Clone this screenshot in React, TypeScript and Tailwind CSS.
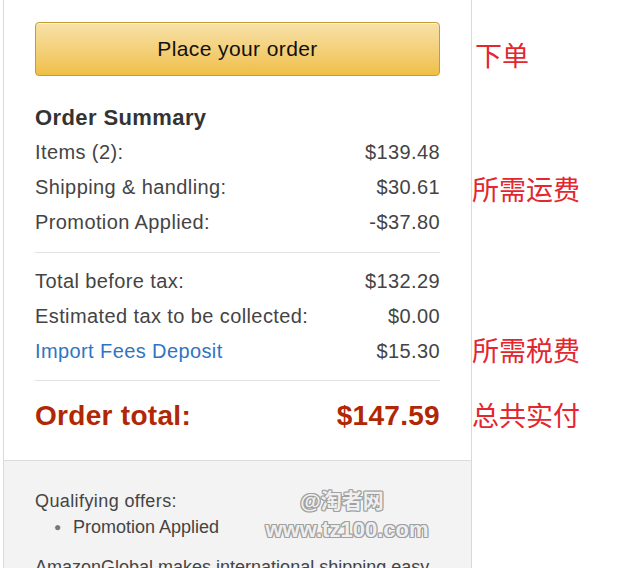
import React from "react";

type Row = { label: string; value: string; link?: boolean };

const topRows: Row[] = [
  { label: "Items (2):", value: "$139.48" },
  { label: "Shipping & handling:", value: "$30.61" },
  { label: "Promotion Applied:", value: "-$37.80" },
];

const taxRows: Row[] = [
  { label: "Total before tax:", value: "$132.29" },
  { label: "Estimated tax to be collected:", value: "$0.00" },
  { label: "Import Fees Deposit", value: "$15.30", link: true },
];

const SummaryRow = ({ row }: { row: Row }) => (
  <div className="flex justify-between h-[35px] leading-[35px] text-[20px] tracking-[0.4px]">
    <span className={row.link ? "text-[#2f74c2]" : "text-[#444]"}>{row.label}</span>
    <span className="text-[#444]">{row.value}</span>
  </div>
);

const Note = ({ text, className }: { text: string; className: string }) => (
  <div
    className={`h-[34px] leading-[34px] text-[27px] text-[#e4262e] whitespace-nowrap ${className}`}
    style={{ fontFamily: '"Noto Sans CJK SC", sans-serif' }}
  >
    {text}
  </div>
);

export default function App() {
  return (
    <div
      className="flex w-[635px] h-[568px] overflow-hidden bg-white"
      style={{ fontFamily: '"Liberation Sans", Arial, sans-serif' }}
    >
      <div className="ml-[3px] w-[469px] shrink-0 border-x border-[#d9d9d9] flex flex-col">
        <div className="px-[31px] pt-[22px] pb-[27px]">
          <button className="w-full h-[54px] rounded-[4px] border border-[#c59c38] bg-gradient-to-b from-[#f8e1a7] to-[#efbf45] text-[21px] tracking-[0.4px] text-[#111] shadow-[inset_0_1px_0_rgba(255,255,255,0.6)]">
            Place your order
          </button>

          <div className="mt-[29px] h-[26px] leading-[26px] text-[22px] font-bold tracking-[0.4px] text-[#333]">
            Order Summary
          </div>

          <div className="mt-[4px]">
            {topRows.map((r) => (
              <SummaryRow key={r.label} row={r} />
            ))}
          </div>

          <div className="mt-[12px] border-t border-[#e3e3e3]" />

          <div className="mt-[11px]">
            {taxRows.map((r) => (
              <SummaryRow key={r.label} row={r} />
            ))}
          </div>

          <div className="mt-[11px] border-t border-[#e3e3e3]" />

          <div className="mt-[18px] flex justify-between h-[34px] leading-[34px] text-[28px] font-bold tracking-[0.3px] text-[#b12704]">
            <span>Order total:</span>
            <span>$147.59</span>
          </div>
        </div>

        <div className="relative flex-1 border-t border-[#dcdcdc] bg-[#f3f3f3] px-[31px] pt-[27px] text-[18px] text-[#444]">
          <div className="h-[26px] leading-[26px] tracking-[0.4px]">Qualifying offers:</div>
          <div className="h-[26px] leading-[26px] flex items-center">
            <span className="w-[38px] pl-[19px] text-[12px] text-[#777]">●</span>
            <span>Promotion Applied</span>
          </div>
          <div className="mt-[14px] h-[26px] leading-[26px] whitespace-nowrap">
            AmazonGlobal makes international shipping easy
          </div>

          <div
            className="absolute left-[257px] top-[25px] w-[172px] text-center text-[#efefef] leading-[29px]"
            style={{
              textShadow:
                "1px 0 0 #a0a0a0, -1px 0 0 #a0a0a0, 0 1px 0 #a0a0a0, 0 -1px 0 #a0a0a0, 1px 1px 0 #a0a0a0, -1px -1px 0 #a0a0a0, 1px -1px 0 #a0a0a0, -1px 1px 0 #a0a0a0",
            }}
          >
            <div
              className="text-[21px] font-bold pr-[10px]"
              style={{ fontFamily: '"Liberation Sans", "Noto Sans CJK SC", sans-serif' }}
            >
              @淘者网
            </div>
            <div className="text-[22px] font-bold">www.tz100.com</div>
          </div>
        </div>
      </div>

      <div className="flex flex-col">
        <Note text="下单" className="mt-[38px] ml-[3px]" />
        <Note text="所需运费" className="mt-[100px]" />
        <Note text="所需税费" className="mt-[127px]" />
        <Note text="总共实付" className="mt-[31px]" />
      </div>
    </div>
  );
}
